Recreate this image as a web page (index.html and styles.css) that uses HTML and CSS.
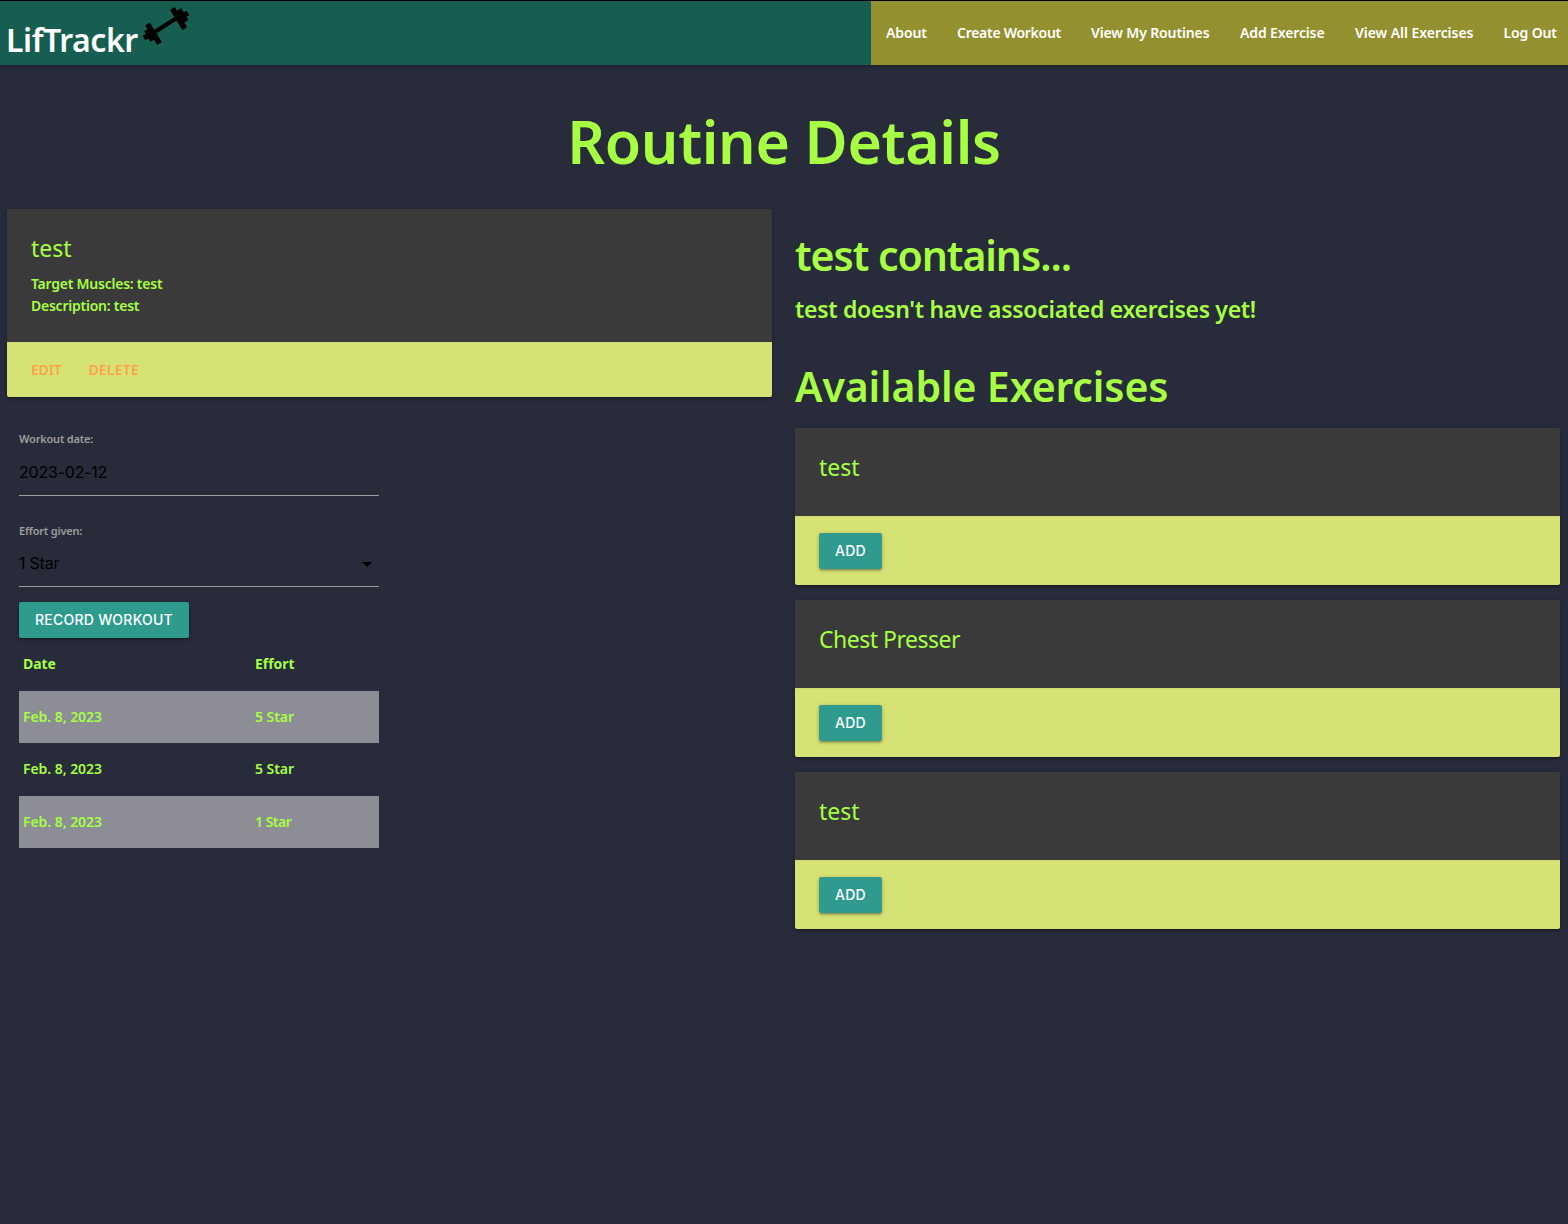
FILE: index.html
```html
<!DOCTYPE html>
<html lang="en">
<head>
<meta charset="utf-8">
<title>LifTrackr</title>
<link rel="stylesheet" href="styles.css">
</head>
<body>
<header class="nav">
  <a class="brand"><span class="brand-name">LifTrackr</span>
    <svg class="dumbbell" viewBox="0 0 60 52" width="60" height="52" fill="none" stroke="#000" stroke-linejoin="round"><path stroke-width="4.2" d="M18 33 45 16"/><path stroke-width="5.4" d="M12.5 24 24.5 43.5M37.3 8.5 49.8 28.5"/><path stroke-width="5.4" d="M11.5 30 17.5 40.5M43.8 9.5 51 21.5M16 30 21 37M41.5 16 46.5 23"/><path stroke-width="5.4" d="M9 38 17 33.5M45 17.5 53 13"/></svg>
  </a>
  <nav class="links"><a>About</a><a class="create">Create Workout</a><a>View My Routines</a><a>Add Exercise</a><a class="all">View All Exercises</a><a>Log Out</a></nav>
</header>
<h1>Routine Details</h1>
<main class="columns">
  <section class="left">
    <article class="card">
      <div class="content"><span class="title">test</span><p>Target Muscles: test</p><p>Description: test</p></div>
      <div class="action links-row"><a>EDIT</a><a class="delete">DELETE</a></div>
    </article>
    <form class="record">
      <label>Workout date:</label>
      <div class="field">2023-02-12</div>
      <label class="second">Effort given:</label>
      <div class="field select"><span>1 Star</span><svg width="10" height="5" viewBox="0 0 10 5"><path d="M0 0h10L5 5z"/></svg></div>
      <button type="button" class="btn">RECORD WORKOUT</button>
      <table>
        <thead><tr><th>Date</th><th>Effort</th></tr></thead>
        <tbody>
          <tr><td>Feb. 8, 2023</td><td>5 Star</td></tr>
          <tr><td>Feb. 8, 2023</td><td>5 Star</td></tr>
          <tr><td>Feb. 8, 2023</td><td class="one">1 Star</td></tr>
        </tbody>
      </table>
    </form>
  </section>
  <section class="right">
    <h3 class="contains">test contains...</h3>
    <h5>test doesn't have associated exercises yet!</h5>
    <h3 class="available">Available Exercises</h3>
    <article class="card"><div class="content short"><span class="title">test</span></div><div class="action"><button type="button" class="btn">ADD</button></div></article>
    <article class="card"><div class="content short"><span class="title long">Chest Presser</span></div><div class="action"><button type="button" class="btn">ADD</button></div></article>
    <article class="card"><div class="content short"><span class="title">test</span></div><div class="action"><button type="button" class="btn">ADD</button></div></article>
  </section>
</main>
</body>
</html>
```
FILE: styles.css
```css
* { box-sizing: border-box; }
body { margin: 0; min-height: 1224px; background: #282b3a; color: #a7ff44; font: 600 14px/22px "Noto Sans", sans-serif; }
h1, h3, h5, p { margin: 0; }
h1, h3, h5 { font-weight: 600; }
p { letter-spacing: -.24px; }
.nav { display: flex; justify-content: space-between; height: 65px; border-top: 1px solid #000; background: #165e52; color: #fff; box-shadow: 0 2px 2px rgba(0,0,0,.14), 0 1px 5px rgba(0,0,0,.12); }
.brand { display: flex; padding-left: 5px; }
.brand-name { width: 130px; padding: 7px 0 0 1px; font-size: 32px; font-weight: 600; line-height: 64px; letter-spacing: -.45px; white-space: nowrap; }
.dumbbell { margin-top: -1px; }
.links { display: grid; grid-template-columns: 71px 134px 149px 115px 148.5px 79.5px; width: 697px; background: #93912f; line-height: 64px; letter-spacing: -.13px; white-space: nowrap; }
.links a { padding-left: 15px; }
.links .create { letter-spacing: -.28px; }
.links .all { letter-spacing: -.05px; }
h1 { margin-top: 42px; height: 69px; font-size: 59px; line-height: 69px; letter-spacing: -.35px; text-align: center; }
.columns { display: grid; grid-template-columns: 765px 765px; gap: 23px; padding: 33px 0 0 7px; }
.card { border-radius: 2px; background: #3a3a3a; box-shadow: 0 2px 2px rgba(0,0,0,.14), 0 3px 1px -2px rgba(0,0,0,.12), 0 1px 5px rgba(0,0,0,.2); }
.content { height: 133px; padding: 24px; }
.content.short { height: 88px; }
.title { display: block; margin-bottom: 9px; font-size: 23px; font-weight: 400; line-height: 31px; }
.title.long { letter-spacing: -.5px; }
.action { padding: 16px 24px; border-top: 1px solid #d0d878; background: #d7e275; border-radius: 0 0 2px 2px; }
.links-row { display: flex; gap: 27px; height: 55px; color: #ffa149; }
.links-row a { letter-spacing: -.2px; }
.links-row .delete { letter-spacing: .2px; }
.record { width: 360px; margin: 31px 0 0 12px; }
label { display: block; height: 22px; font-size: 11px; letter-spacing: -.2px; color: #9e9e9e; }
.second { margin-top: 24px; }
.field { height: 46px; border-bottom: 1px solid #9e9e9e; color: #000; font: 400 16px/45px Inter, sans-serif; letter-spacing: -.22px; }
.select { display: flex; height: 45px; align-items: center; justify-content: space-between; padding-right: 7px; line-height: 42px; }
.select span { padding-bottom: 2px; }
.btn { display: block; height: 36px; padding: 0 16px; border: 0; border-radius: 2px; background: #2f9b8e; color: #fff; font: 500 14px/36px Inter, sans-serif; letter-spacing: .25px; box-shadow: 0 2px 2px rgba(0,0,0,.14), 0 3px 1px -2px rgba(0,0,0,.12), 0 1px 5px rgba(0,0,0,.2); }
.record .btn { margin-top: 15px; }
table { width: 100%; border-collapse: collapse; table-layout: fixed; }
th, td { height: 52.5px; padding: 0 4px; text-align: left; letter-spacing: -.05px; }
th:first-child { width: 232px; }
th { font-weight: 700; }
td.one { letter-spacing: -.5px; }
tbody tr:nth-child(odd) { background: #8d8d95; }
h3 { font-size: 41px; line-height: 48px; }
.contains { margin-top: 22px; letter-spacing: -1.05px; }
h5 { margin-top: 17px; font-size: 23px; line-height: 27px; letter-spacing: -.3px; }
.available { margin: 39px 0 18px; letter-spacing: -.12px; }
.right .card + .card { margin-top: 15px; }
```
